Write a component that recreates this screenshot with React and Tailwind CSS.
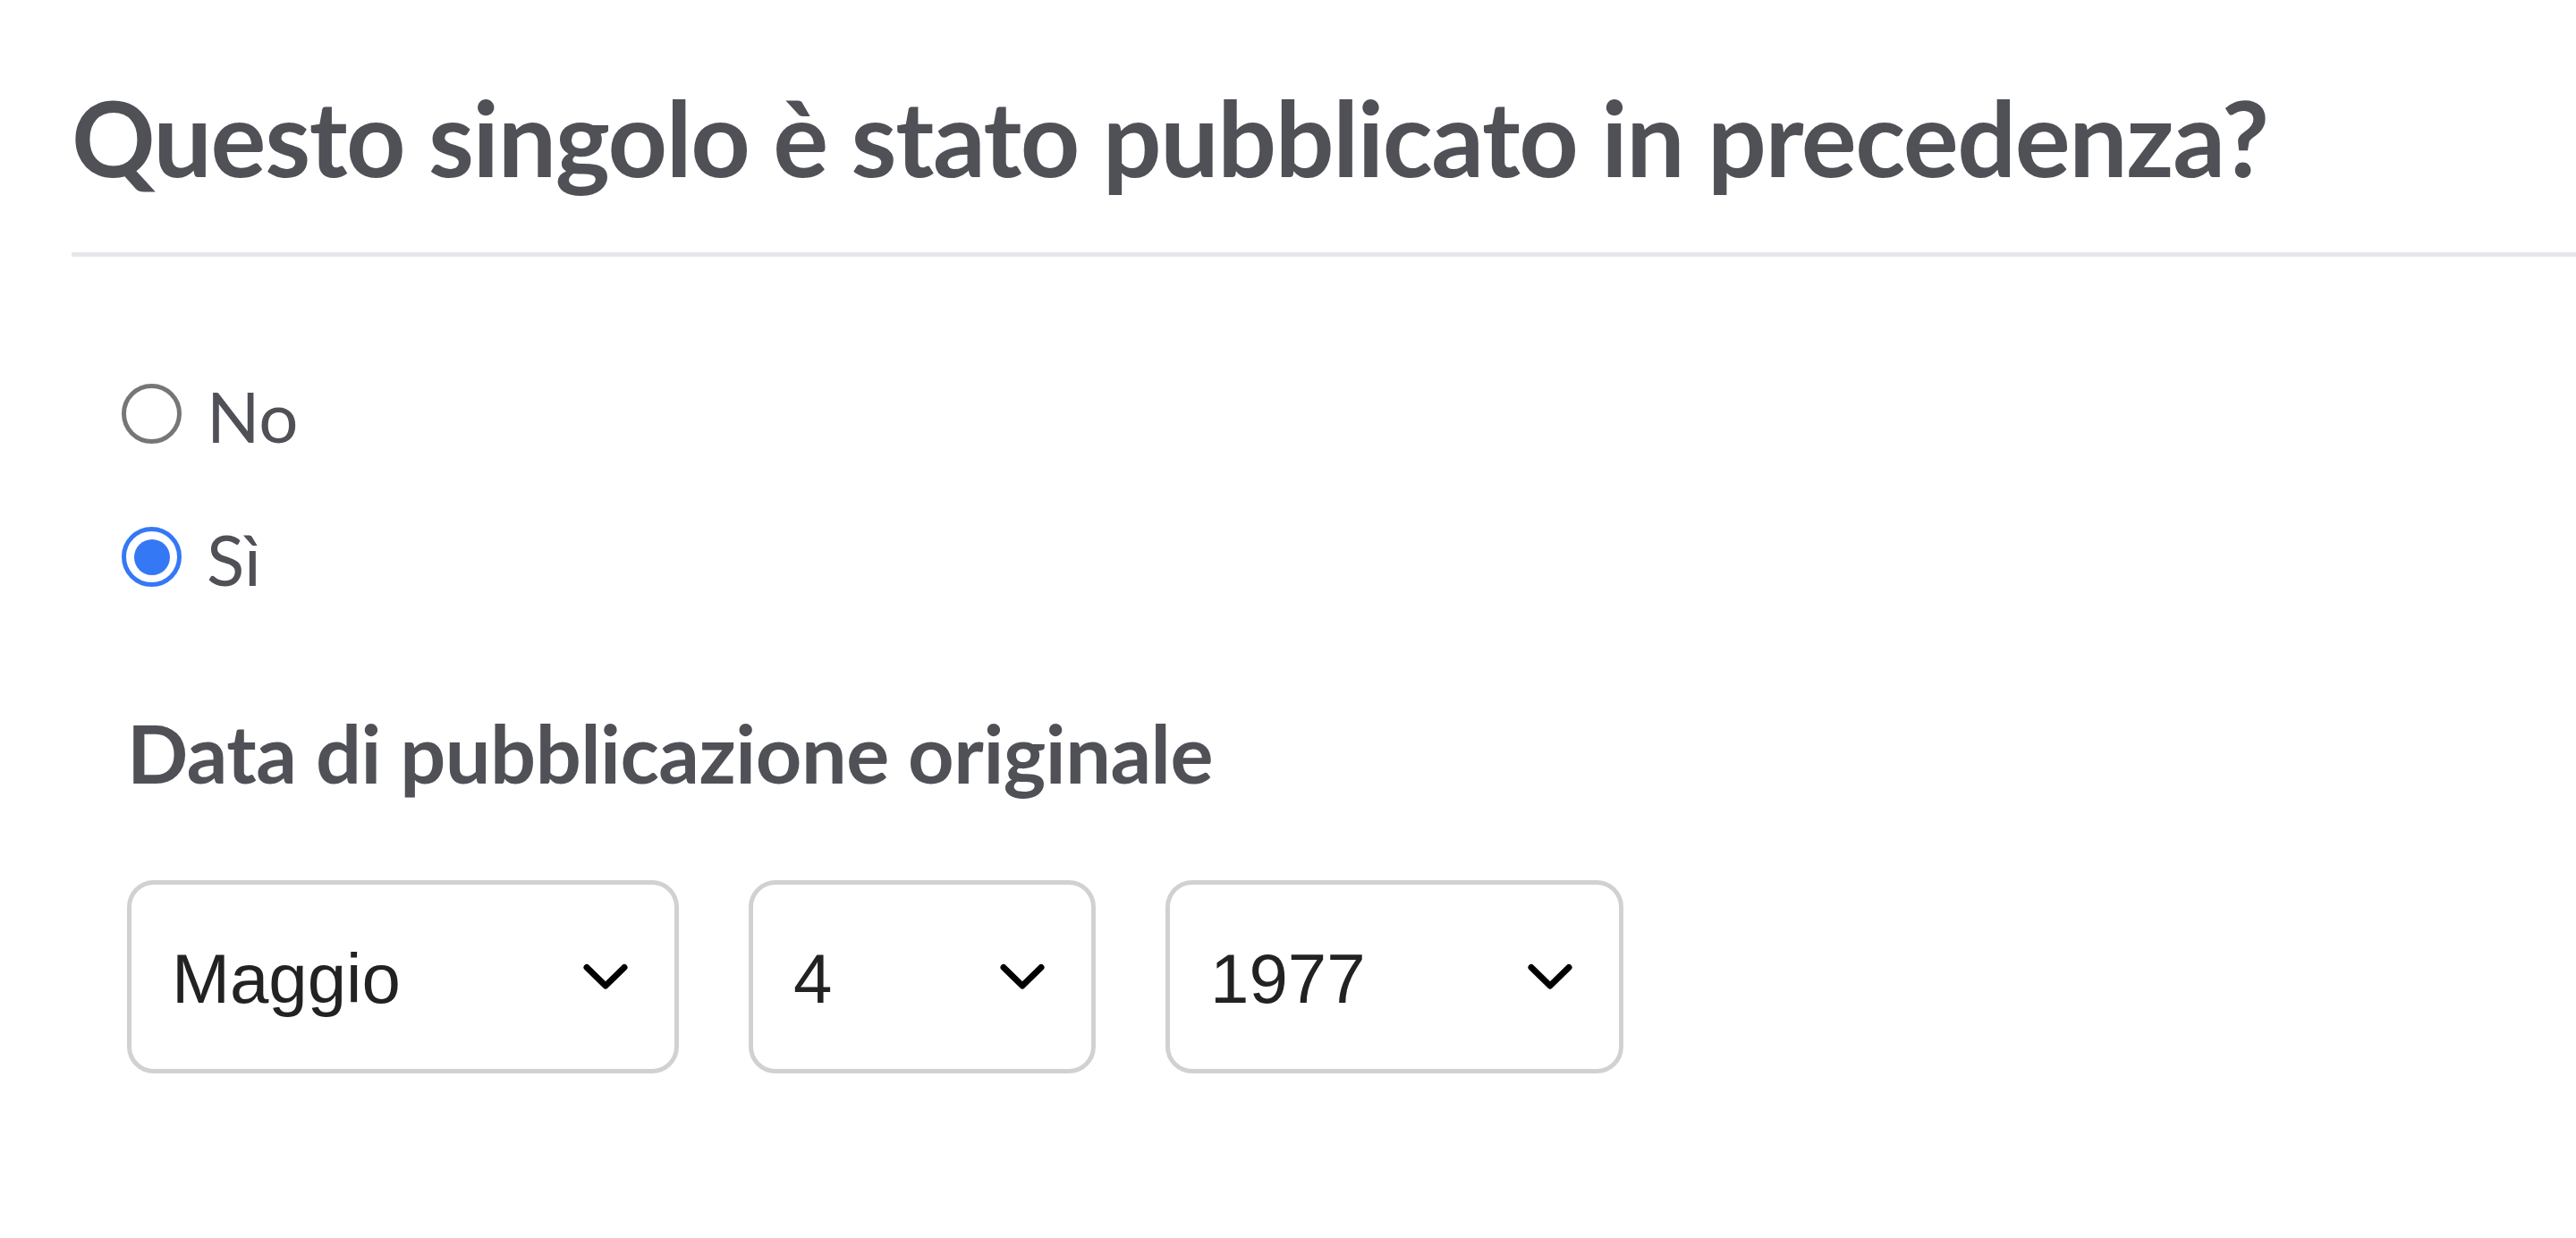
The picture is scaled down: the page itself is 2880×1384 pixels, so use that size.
import { useState } from 'react'

const months = ['Gennaio', 'Febbraio', 'Marzo', 'Aprile', 'Maggio', 'Giugno', 'Luglio', 'Agosto', 'Settembre', 'Ottobre', 'Novembre', 'Dicembre']

function Chevron() {
  return (
    <svg width="50" height="30" viewBox="0 0 50 30" fill="none" className="shrink-0">
      <path d="M4 4.5 L25 25 L46 4.5" stroke="#000" strokeWidth="7" strokeLinecap="round" strokeLinejoin="round" />
    </svg>
  )
}

function FakeSelect({ value, width }) {
  return (
    <div
      className={`flex h-[216px] items-center justify-between rounded-[30px] border-[5px] border-[#d1d1d1] bg-white pl-[45px] pr-[52px] ${width}`}
    >
      <span className="mt-[3px] font-['Liberation_Sans',Arial,sans-serif] text-[78px] leading-none text-[#222222]">{value}</span>
      <Chevron />
    </div>
  )
}

function Radio({ label, checked, onClick }) {
  return (
    <label onClick={onClick} className="flex cursor-pointer items-center gap-[28px]">
      {checked ? (
        <span className="-mt-[6px] flex h-[67px] w-[67px] shrink-0 items-center justify-center rounded-full border-[5px] border-[#3478f6] bg-white">
          <span className="h-[40px] w-[40px] rounded-full bg-[#3478f6]" />
        </span>
      ) : (
        <span className="-mt-[6px] h-[67px] w-[67px] shrink-0 rounded-full border-[5px] border-[#767676] bg-white" />
      )}
      <span className="text-[78px] leading-[1.2] text-[#505157]">{label}</span>
    </label>
  )
}

export default function App() {
  const [released, setReleased] = useState(true)

  return (
    <div className="min-h-screen bg-white pt-[84px] pl-[80px] font-['Lato','Noto_Sans',sans-serif]">
      <h1 className="text-[116px] font-bold leading-[1.2] tracking-[-1.4px] text-[#505157]">Questo singolo è stato pubblicato in precedenza?</h1>
      <div className="mt-[59px] h-[5px] bg-[#e6e7ea]" />

      <div className="pl-[56px] pt-[132px]">
        <div className="flex flex-col gap-[66px]">
          <Radio label="No" checked={!released} onClick={() => setReleased(false)} />
          <Radio label="Sì" checked={released} onClick={() => setReleased(true)} />
        </div>
      </div>

      {released && (
        <div className="pl-[62px] pt-[115px]">
          <h2 className="text-[90px] font-bold leading-[1.2] tracking-[-0.5px] text-[#505157]">Data di pubblicazione originale</h2>
          <div className="mt-[89px] flex gap-[78px]">
            <FakeSelect value={months[4]} width="w-[617px]" />
            <FakeSelect value="4" width="w-[388px]" />
            <FakeSelect value="1977" width="w-[512px]" />
          </div>
        </div>
      )}
    </div>
  )
}
